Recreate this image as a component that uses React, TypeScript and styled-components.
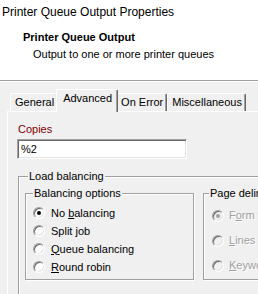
import React from "react";
import styled, { createGlobalStyle } from "styled-components";

const Global = createGlobalStyle`
  html, body {
    margin: 0;
    padding: 0;
    background: #f0f0f0;
    overflow: hidden;
  }
  body {
    width: 258px;
    height: 294px;
    font-family: "Liberation Sans", Arial, sans-serif;
    font-size: 11px;
    line-height: 13px;
    color: #000;
  }
`;

const Header = styled.div`
  background: #fff;
  border-bottom: 1px solid #a0a0a0;
  box-shadow: 0 1px 0 #fff;
  padding: 5px 0 0 2px;
  box-sizing: border-box;
  height: 81px;
`;

const Title = styled.div`
  font-size: 12px;
  line-height: 14px;
  white-space: nowrap;
`;

const Heading = styled.div`
  margin: 12px 0 0 21px;
  font-weight: bold;
  white-space: nowrap;
`;

const Subtitle = styled.div`
  margin: 4px 0 0 31px;
  white-space: nowrap;
`;

const Main = styled.div`
  padding: 8px 0 0 7px;
`;

const TabStrip = styled.div`
  display: flex;
  align-items: flex-end;
  height: 22px;
  padding-left: 3px;
  position: relative;
  z-index: 1;
`;

const Tab = styled.div<{ $active?: boolean }>`
  box-sizing: border-box;
  height: ${(p) => (p.$active ? 23 : 18)}px;
  margin: 0 ${(p) => (p.$active ? -2 : 0)}px ${(p) => (p.$active ? -1 : 0)}px;
  padding: ${(p) => (p.$active ? "2px 5px 0 6px" : "2px 3px 0 4px")};
  background: #f0f0f0;
  border-left: 1px solid #fff;
  border-top: 1px solid #fff;
  border-right: 1px solid #696969;
  box-shadow: inset -1px 0 0 #a0a0a0;
  border-top-left-radius: 2px;
  border-top-right-radius: 2px;
  white-space: nowrap;
  position: relative;
  z-index: ${(p) => (p.$active ? 2 : 1)};
`;

const Panel = styled.div`
  width: 280px;
  height: 200px;
  border-top: 1px solid #fff;
  border-left: 1px solid #fff;
  padding: 11px 0 0 9px;
  box-sizing: border-box;
`;

const FieldLabel = styled.div`
  color: #800000;
  padding-left: 1px;
  margin-bottom: 3px;
`;

const TextInput = styled.div`
  box-sizing: border-box;
  width: 170px;
  height: 20px;
  background: #fff;
  border-style: solid;
  border-width: 1px;
  border-color: #a0a0a0 #fff #fff #a0a0a0;
  box-shadow: inset 1px 1px 0 #696969, inset -1px -1px 0 #e3e3e3;
  padding: 3px 0 0 3px;
  margin-bottom: 11px;
`;

const Group = styled.fieldset<{ $pad: number }>`
  margin: 0;
  min-width: 0;
  border: 1px solid #a0a0a0;
  box-shadow: inset 1px 1px 0 #fff, 1px 1px 0 #fff;
  padding: 0 0 0 ${(p) => p.$pad}px;
`;

const OuterGroup = styled(Group)`
  margin-left: 1px;
  width: 250px;
  box-sizing: border-box;
  padding-bottom: 30px;
`;

const GroupLegend = styled.legend<{ $offset?: number }>`
  padding: 0 1px;
  margin-left: ${(p) => p.$offset ?? 0}px;
  line-height: 13px;
  background: #f0f0f0;
  white-space: nowrap;
`;

const GroupRow = styled.div`
  display: flex;
  padding-top: 4px;
`;

const OptionsGroup = styled(Group)`
  width: 169px;
  box-sizing: border-box;
  flex: none;
  padding-top: 4px;
  padding-bottom: 3px;
`;

const DelimGroup = styled(Group)`
  margin-left: 9px;
  width: 120px;
  box-sizing: border-box;
  flex: none;
  padding-top: 3px;
  padding-bottom: 1px;
`;

const RadioList = styled.div<{ $indent?: number }>`
  display: flex;
  flex-direction: column;
  padding-left: ${(p) => p.$indent ?? 0}px;
`;

const RadioRow = styled.div<{ $h: number; $gap: number; $disabled?: boolean }>`
  display: flex;
  align-items: center;
  height: ${(p) => p.$h}px;
  gap: ${(p) => p.$gap}px;
  white-space: nowrap;
  color: ${(p) => (p.$disabled ? "#a0a0a0" : "#000")};
  text-shadow: ${(p) => (p.$disabled ? "1px 1px 0 #fff" : "none")};
`;

const RadioCircle = styled.span<{ $checked?: boolean; $disabled?: boolean }>`
  box-sizing: border-box;
  width: 12px;
  height: 12px;
  flex: none;
  border-radius: 50%;
  border: 1px solid;
  border-color: #a0a0a0 #fff #fff #a0a0a0;
  background: ${(p) => (p.$disabled ? "#f0f0f0" : "#fff")};
  box-shadow: inset 1px 1px 0 #696969, inset -1px -1px 0 #e3e3e3;
  display: flex;
  align-items: center;
  justify-content: center;
  &::after {
    content: "";
    display: ${(p) => (p.$checked ? "block" : "none")};
    width: 4px;
    height: 4px;
    border-radius: 50%;
    background: ${(p) => (p.$disabled ? "#a0a0a0" : "#000")};
  }
`;

const Key = styled.span`
  text-decoration: underline;
`;

type Opt = { pre?: string; key?: string; post: string; checked?: boolean };

const balancing: Opt[] = [
  { pre: "No ", key: "b", post: "alancing", checked: true },
  { pre: "", key: "", post: "Split job" },
  { pre: "", key: "Q", post: "ueue balancing" },
  { pre: "", key: "R", post: "ound robin" },
];

const delims: Opt[] = [
  { pre: "F", key: "o", post: "rm feed", checked: true },
  { pre: "", key: "L", post: "ines per page" },
  { pre: "", key: "K", post: "eyword" },
];

function Radio({ o, h, gap, disabled }: { o: Opt; h: number; gap: number; disabled?: boolean }) {
  return (
    <RadioRow $h={h} $gap={gap} $disabled={disabled}>
      <RadioCircle $checked={o.checked} $disabled={disabled} />
      <span>
        {o.pre}
        {o.key ? <Key>{o.key}</Key> : null}
        {o.post}
      </span>
    </RadioRow>
  );
}

export default function App() {
  return (
    <>
      <Global />
      <Header>
        <Title>Printer Queue Output Properties</Title>
        <Heading>Printer Queue Output</Heading>
        <Subtitle>Output to one or more printer queues</Subtitle>
      </Header>
      <Main>
        <TabStrip>
          <Tab>General</Tab>
          <Tab $active>Advanced</Tab>
          <Tab>On Error</Tab>
          <Tab>Miscellaneous</Tab>
        </TabStrip>
        <Panel>
          <FieldLabel>Copies</FieldLabel>
          <TextInput>%2</TextInput>
          <OuterGroup $pad={6}>
            <GroupLegend $offset={3}>Load balancing</GroupLegend>
            <GroupRow>
              <OptionsGroup $pad={7}>
                <GroupLegend>Balancing options</GroupLegend>
                <RadioList>
                  {balancing.map((o, i) => (
                    <Radio key={i} o={o} h={18} gap={6} />
                  ))}
                </RadioList>
              </OptionsGroup>
              <DelimGroup $pad={5}>
                <GroupLegend>Page delimiter</GroupLegend>
                <RadioList $indent={3}>
                  {delims.map((o, i) => (
                    <Radio key={i} o={o} h={25} gap={5} disabled />
                  ))}
                </RadioList>
              </DelimGroup>
            </GroupRow>
          </OuterGroup>
        </Panel>
      </Main>
    </>
  );
}
